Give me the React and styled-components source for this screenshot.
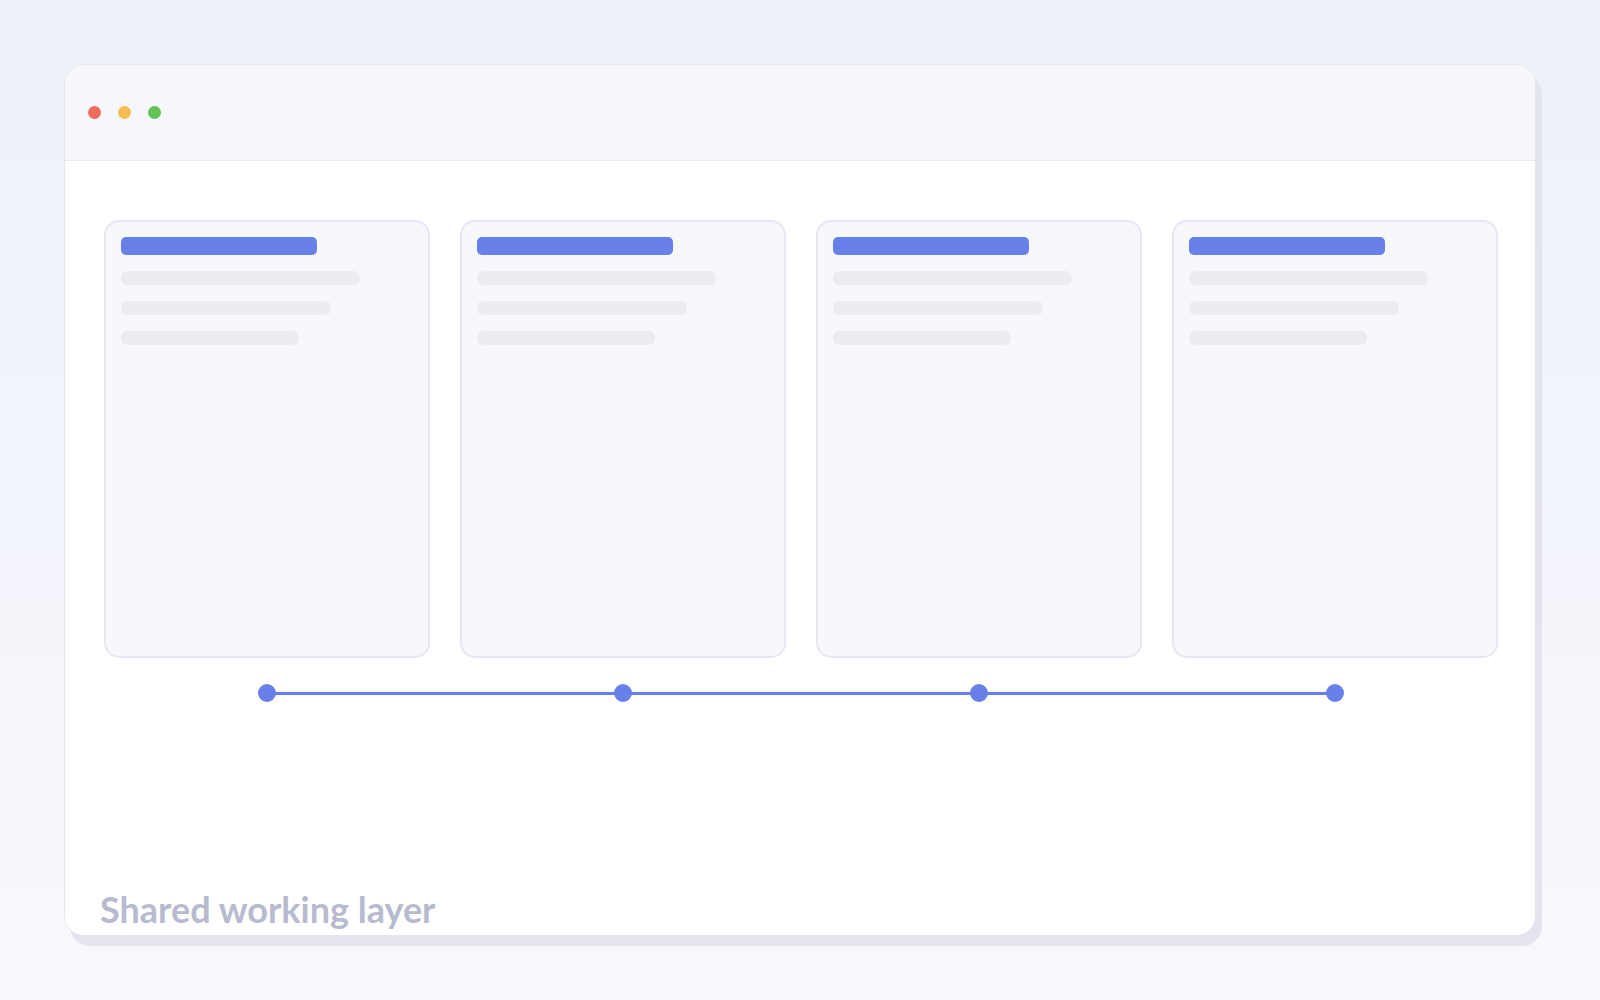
import styled, { createGlobalStyle } from 'styled-components';

const GlobalStyle = createGlobalStyle`
  * {
    box-sizing: border-box;
  }

  body {
    margin: 0;
    font-family: Lato, "Open Sans", "Liberation Sans", sans-serif;
  }
`;

const cards = [1, 2, 3, 4];
const lines = ['82%', '72%', '61%'];

const App = () => {
  return (
    <Page>
      <GlobalStyle />
      <Window>
        <TitleBar>
          <Dot color='#ee6b5e' />
          <Dot color='#f5bf4f' />
          <Dot color='#61c454' />
        </TitleBar>
        <Body>
          <Board>
            <CardRow>
              {cards.map((id) => (
                <Card key={id}>
                  <CardTitle />
                  {lines.map((width) => (
                    <Line key={width} $width={width} />
                  ))}
                </Card>
              ))}
            </CardRow>
            <Timeline>
              {cards.map((id) => (
                <Stop key={id}>
                  <Node />
                </Stop>
              ))}
            </Timeline>
          </Board>
          <Caption>Shared working layer</Caption>
        </Body>
      </Window>
    </Page>
  );
};

export default App;

const Page = styled.div`
  min-height: 100vh;
  padding: 64px 64px 0 64px;
  background: linear-gradient(180deg, #eef0fa 0%, #f8f9fd 100%);
`;

const Window = styled.div`
  display: flex;
  flex-direction: column;
  width: 1472px;
  height: 872px;
  background: #ffffff;
  border: 1px solid #e6e7ef;
  border-radius: 20px;
  box-shadow: 6px 10px 0 #e3e4ee;
  overflow: hidden;
`;

const TitleBar = styled.div`
  display: flex;
  align-items: center;
  gap: 17px;
  height: 96px;
  padding-left: 23px;
  background: #f6f7fa;
  border-bottom: 1px solid #e9eaf1;
  flex-shrink: 0;
`;

const Dot = styled.span`
  width: 13px;
  height: 13px;
  border-radius: 50%;
  background: ${(props) => props.color};
`;

const Body = styled.div`
  flex: 1;
  display: flex;
  flex-direction: column;
  padding-top: 59px;
`;

const Board = styled.div`
  padding: 0 37px 0 39px;
`;

const CardRow = styled.div`
  display: grid;
  grid-template-columns: repeat(4, 1fr);
  gap: 30px;
`;

const Card = styled.div`
  display: flex;
  flex-direction: column;
  gap: 16px;
  height: 438px;
  padding: 15px;
  background: #f7f8fc;
  border: 2px solid #e6e7f1;
  border-radius: 15px;
`;

const CardTitle = styled.div`
  width: 67%;
  height: 18px;
  border-radius: 5px;
  background: #6780ea;
`;

const Line = styled.div`
  width: ${(props) => props.$width};
  height: 14px;
  border-radius: 6px;
  background: #ecedf2;
`;

const Timeline = styled.div`
  position: relative;
  display: grid;
  grid-template-columns: repeat(4, 1fr);
  gap: 30px;
  margin-top: 26px;

  &::before {
    content: '';
    position: absolute;
    top: 50%;
    left: calc((100% - 90px) / 8);
    right: calc((100% - 90px) / 8);
    height: 3px;
    margin-top: -1.5px;
    background: #6780ea;
  }
`;

const Stop = styled.div`
  display: flex;
  justify-content: center;
`;

const Node = styled.span`
  position: relative;
  width: 18px;
  height: 18px;
  border-radius: 50%;
  background: #6780ea;
`;

const Caption = styled.div`
  margin-top: auto;
  padding: 0 0 4px 35px;
  font-size: 36px;
  font-weight: 700;
  line-height: 44px;
  color: #b8bbcf;
`;
